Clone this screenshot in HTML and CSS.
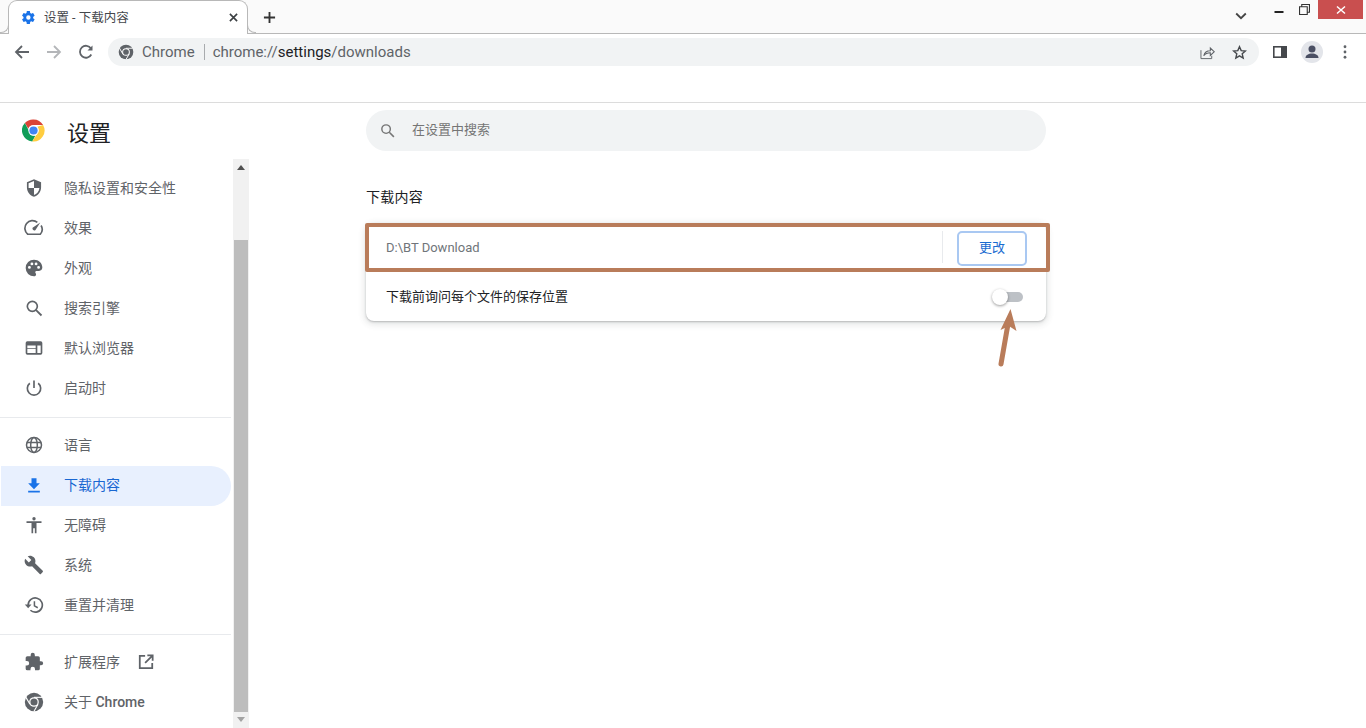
FILE: index.html
```html
<!DOCTYPE html>
<html lang="zh-CN">
<head>
<meta charset="utf-8">
<title>设置 - 下载内容</title>
<link rel="stylesheet" href="styles.css">
</head>
<body>
<svg class="defs" width="0" height="0" aria-hidden="true">
  <symbol id="chrome-mono" viewBox="0 0 24 24">
    <circle cx="12" cy="12" r="11" fill="currentColor"/>
    <g stroke="#fff" stroke-width="1.300"><path d="M12 6.400h10"/><path d="M12 6.400h10" transform="rotate(120 12 12)"/><path d="M12 6.400h10" transform="rotate(240 12 12)"/></g>
    <circle cx="12" cy="12" r="5.800" fill="#fff"/><circle cx="12" cy="12" r="4.300" fill="currentColor"/>
  </symbol>
</svg>
<div class="browser">
  <div class="tabstrip">
    <div class="tab">
      <svg class="tab-gear" viewBox="0 0 24 24"><path fill="#1a73e8" d="M19.400 13c.05-.33.07-.66.07-1s-.03-.67-.08-1l2.200-1.700c.2-.15.250-.43.130-.65l-2.100-3.600a.5.500 0 0 0-.63-.22l-2.600 1a7.700 7.700 0 0 0-1.700-1L14.300 2.100a.5.500 0 0 0-.5-.4H9.700a.5.5 0 0 0-.5.4l-.4 2.700c-.6.250-1.200.6-1.700 1l-2.600-1a.5.500 0 0 0-.6.220l-2.100 3.600c-.13.220-.08.500.12.650L4.100 11c-.05.330-.08.670-.08 1s.03.670.08 1l-2.200 1.700a.5.500 0 0 0-.12.650l2.100 3.600c.12.220.38.300.6.220l2.600-1c.5.400 1.100.750 1.700 1l.4 2.700c.05.240.250.400.5.400h4.100c.25 0 .45-.16.500-.4l.4-2.700c.6-.25 1.200-.6 1.700-1l2.600 1c.22.080.5 0 .62-.22l2.100-3.600a.5.500 0 0 0-.13-.65L19.400 13zM11.800 15.500a3.500 3.500 0 1 1 0-7 3.500 3.500 0 0 1 0 7z"/></svg>
      <span class="tab-title">设置 - 下载内容</span>
      <svg class="tab-close" viewBox="0 0 10 10"><path d="M1 1l8 8M9 1L1 9" stroke="#3c4043" stroke-width="1.800" fill="none"/></svg>
    </div>
    <svg class="new-tab" viewBox="0 0 14 14"><path d="M7 1v12M1 7h12" stroke="#333" stroke-width="2" fill="none"/></svg>
    <div class="strip-right">
      <svg class="tab-search" viewBox="0 0 12 8"><path d="M1.200 1.500 6 6.200l4.800-4.700" stroke="#444" stroke-width="1.800" fill="none"/></svg>
      <svg class="win-min" viewBox="0 0 10 3"><rect width="9" height="2" x=".5" fill="#222"/></svg>
      <svg class="win-max" viewBox="0 0 10 10"><path d="M.5 2.500h7v7h-7zM2.500 2.500v-2h7v7h-2" stroke="#333" fill="none"/></svg>
      <div class="win-close"><svg viewBox="0 0 10 10"><path d="M1 1.500l8 7M9 1.500l-8 7" stroke="#fff" stroke-width="1.500" fill="none"/></svg></div>
    </div>
  </div>
  <div class="toolbar">
    <svg class="nav" viewBox="0 0 16 16"><path d="M15 8H2M8 2 2 8l6 6" stroke="#5f6368" stroke-width="1.800" fill="none"/></svg>
    <svg class="nav" viewBox="0 0 16 16"><path d="M1 8h13M8 2l6 6-6 6" stroke="#b4b6b9" stroke-width="1.800" fill="none"/></svg>
    <svg class="nav" viewBox="0 0 16 16"><path d="M13.300 10.500A6 6 0 1 1 13 4.500" stroke="#5f6368" stroke-width="1.800" fill="none"/><path d="M14.500 1.500v5h-5z" fill="#5f6368"/></svg>
    <div class="omnibox">
      <svg class="omni-logo"><use href="#chrome-mono"/></svg>
      <span class="omni-chip">Chrome</span>
      <span class="omni-sep"></span>
      <span class="omni-url">chrome://<b>settings</b>/downloads</span>
      <span class="spacer"></span>
      <svg class="omni-share" viewBox="0 0 16 16"><path d="M1 5.500v9h11.500v-3" stroke="#5f6368" fill="none"/><path d="M4 11.500c.8-3.500 3.500-5.400 7-5.400V3.200l4.300 4-4.300 4V8.300c-3 0-5.200.8-7 3.200z" stroke="#5f6368" stroke-width="1.100" fill="none"/></svg>
      <svg class="omni-star" viewBox="0 0 16 16"><path d="M8 1.800l1.800 4.200 4.500.4-3.400 3 1 4.500L8 11.500l-3.900 2.400 1-4.500-3.400-3 4.500-.4z" stroke="#45484c" stroke-width="1.500" fill="none"/></svg>
    </div>
    <svg class="panel" viewBox="0 0 14 12"><rect x=".8" y=".8" width="12.400" height="10.400" stroke="#45484c" stroke-width="1.600" fill="#fff"/><rect x="8" y="1" width="5" height="10" fill="#45484c"/></svg>
    <div class="avatar"><svg viewBox="0 0 22 22"><circle cx="11" cy="8" r="3.500" fill="#4a4f63"/><path d="M4.500 17c0-3 3-4.500 6.500-4.500s6.500 1.500 6.500 4.500z" fill="#4a4f63"/></svg></div>
    <svg class="menu-dots" viewBox="0 0 4 16"><circle cx="2" cy="2" r="1.600" fill="#5f6368"/><circle cx="2" cy="8" r="1.600" fill="#5f6368"/><circle cx="2" cy="14" r="1.600" fill="#5f6368"/></svg>
  </div>
  <div class="bookmarks"></div>
</div>
<div class="page">
  <aside class="side">
    <div class="brand">
      <svg class="brand-logo" viewBox="0 0 24 24">
        <path fill="#db4437" d="M12 .5a11.500 11.500 0 0 1 10 5.800H12a5.700 5.700 0 0 0-5.400 3.900L3 4.200A11.500 11.500 0 0 1 12 .5z"/>
        <path fill="#0f9d58" d="M3 4.200l4.400 8.300a5.700 5.700 0 0 0 6.500 5L10.700 23.400A11.500 11.500 0 0 1 3 4.200z"/>
        <path fill="#ffcd40" d="M22 6.300a11.500 11.500 0 0 1-11.300 17.100l4.900-7.900A5.700 5.700 0 0 0 16 8z"/>
        <circle cx="12" cy="12" r="5.400" fill="#fff"/><circle cx="12" cy="12" r="4.300" fill="#4285f4"/>
      </svg>
      <span class="brand-name">设置</span>
    </div>
    <div class="side-scroll">
      <nav class="side-nav">
        <a class="item"><svg viewBox="0 0 24 24"><path fill="#5f6368" d="M12 1.500 3.500 5v6c0 5.300 3.600 10.200 8.500 11.500 4.900-1.300 8.500-6.200 8.500-11.500V5zm0 10.500H5.500V6.300L12 3.600zm0 0h6.500c-.5 4-3 7.500-6.500 8.500z"/></svg><span>隐私设置和安全性</span></a>
        <a class="item"><svg viewBox="0 0 24 24"><path fill="none" stroke="#5f6368" stroke-width="2" d="M20.500 9a9 9 0 0 1-1 10.500h-15A9 9 0 0 1 16 5.200"/><path fill="#5f6368" d="M19.500 5.500 13.800 14.300a2.200 2.200 0 0 1-3.500-2.500z"/></svg><span>效果</span></a>
        <a class="item"><svg viewBox="0 0 24 24"><path fill="#5f6368" fill-rule="evenodd" d="M12 2a10 10 0 0 0 0 20c1.500 0 2.500-1 2.500-2.300 0-1.300-1-1.700-1-2.700s.8-1.500 2-1.500H18c2.300 0 4-1.700 4-4C22 5.800 17.500 2 12 2zM6.500 13a1.700 1.700 0 1 1 0-3.400 1.700 1.700 0 0 1 0 3.400zm3-4.200a1.700 1.700 0 1 1 0-3.400 1.700 1.700 0 0 1 0 3.400zm5 0a1.700 1.700 0 1 1 0-3.400 1.700 1.700 0 0 1 0 3.400zm3 4.200a1.700 1.700 0 1 1 0-3.400 1.700 1.700 0 0 1 0 3.400z"/></svg><span>外观</span></a>
        <a class="item"><svg viewBox="0 0 24 24"><circle cx="10" cy="10" r="6" fill="none" stroke="#5f6368" stroke-width="2"/><path d="M14.500 14.500 21 21" stroke="#5f6368" stroke-width="2.200"/></svg><span>搜索引擎</span></a>
        <a class="item"><svg viewBox="0 0 24 24"><path fill="#5f6368" fill-rule="evenodd" d="M4 4h16a2 2 0 0 1 2 2v12a2 2 0 0 1-2 2H4a2 2 0 0 1-2-2V6a2 2 0 0 1 2-2zm0 5v9h10v-5H4V9zm0 0v3h10V9zm12 0v9h4V9z"/></svg><span>默认浏览器</span></a>
        <a class="item"><svg viewBox="0 0 24 24"><path d="M12 3v9" stroke="#5f6368" stroke-width="2"/><path d="M7 6.300a8 8 0 1 0 10 0" fill="none" stroke="#5f6368" stroke-width="2"/></svg><span>启动时</span></a>
        <div class="rule"></div>
        <a class="item"><svg viewBox="0 0 24 24"><g fill="none" stroke="#5f6368" stroke-width="1.800"><circle cx="12" cy="12" r="9"/><ellipse cx="12" cy="12" rx="4" ry="9"/><path d="M3.500 9h17M3.500 15h17"/></g></svg><span>语言</span></a>
        <a class="item active"><svg viewBox="0 0 24 24"><path fill="#1a73e8" d="M9 4h6v6h4l-7 7-7-7h4zM5 19h14v2H5z"/></svg><span>下载内容</span></a>
        <a class="item"><svg viewBox="0 0 24 24"><circle cx="12" cy="4.500" r="2" fill="#5f6368"/><path fill="#5f6368" d="M3 7.500h18v2h-6V22h-2v-6h-2v6H9V9.500H3z"/></svg><span>无障碍</span></a>
        <a class="item"><svg viewBox="0 0 24 24"><path fill="#5f6368" d="M22.500 19 13.300 9.800c.9-2.400.4-5.100-1.500-7-2-2-5-2.400-7.400-1.300L8.800 5.900 5.800 8.900 1.400 4.600C.2 7 .7 10 2.700 12c1.900 1.900 4.600 2.400 7 1.500l9.200 9.200c.4.400 1 .4 1.400 0l2.200-2.300c.4-.4.400-1 0-1.400z"/></svg><span>系统</span></a>
        <a class="item"><svg viewBox="0 0 24 24"><path fill="none" stroke="#5f6368" stroke-width="2" d="M5 12a8.500 8.500 0 1 1 2.700 6.300"/><path fill="#5f6368" d="M1 11.500h8L5 16z"/><path fill="none" stroke="#5f6368" stroke-width="1.800" d="M12.500 7.500V13l4 2.300"/></svg><span>重置并清理</span></a>
        <div class="rule"></div>
        <a class="item"><svg viewBox="0 0 24 24"><path fill="#5f6368" d="M20.500 11H19V7a2 2 0 0 0-2-2h-4V3.500a2.500 2.500 0 0 0-5 0V5H4a2 2 0 0 0-2 2v3.800h1.500a2.700 2.700 0 0 1 0 5.400H2V20a2 2 0 0 0 2 2h3.800v-1.500a2.700 2.700 0 0 1 5.400 0V22H17a2 2 0 0 0 2-2v-4h1.500a2.500 2.500 0 0 0 0-5z"/></svg><span>扩展程序</span>
          <svg class="ext-open" viewBox="0 0 18 18"><path d="M8 2H2v14h14v-6M10.500 1.500h6v6M16 2 8 10" fill="none" stroke="#5f6368" stroke-width="2"/></svg></a>
        <a class="item"><svg class="about-logo"><use href="#chrome-mono"/></svg><span>关于 <b class="about">Chrome</b></span></a>
      </nav>
      <div class="scrollbar">
        <span class="arrow up"></span>
        <div class="track"><div class="thumb"></div></div>
        <span class="arrow down"></span>
      </div>
    </div>
  </aside>
  <main class="main">
    <div class="search">
      <svg viewBox="0 0 24 24"><circle cx="10" cy="10" r="6" fill="none" stroke="#757575" stroke-width="2"/><path d="M14.500 14.500 21 21" stroke="#757575" stroke-width="2.200"/></svg>
      <span>在设置中搜索</span>
    </div>
    <h2 class="section">下载内容</h2>
    <section class="card">
      <div class="row row-path">
        <span class="path">D:\BT Download</span>
        <span class="vsep"></span>
        <button class="change">更改</button>
      </div>
      <div class="row row-ask">
        <span class="ask">下载前询问每个文件的保存位置</span>
        <span class="toggle"><i class="knob"></i></span>
      </div>
      <div class="highlight"></div>
      <svg class="pointer" viewBox="0 0 24 62"><path d="M6 56 13 16" stroke="#b97c5a" stroke-width="5" stroke-linecap="round" fill="none"/><path d="M15.500 1 21.500 23 14 18 5.500 22z" fill="#b97c5a"/></svg>
    </section>
  </main>
</div>
</body>
</html>
```
FILE: styles.css
```css
* { box-sizing: border-box; }
html, body { margin: 0; height: 100%; overflow: hidden; }
body { width: 1366px; height: 728px; background: #fff; color: #3c4043; font-family: Roboto, "Noto Sans CJK SC", sans-serif; display: flex; flex-direction: column; }
.defs { position: absolute; }
.browser { flex: none; height: 103px; border-bottom: 1px solid #dcdcdc; }
.tabstrip { height: 34px; background: #fafafa; border-bottom: 1px solid #b8b8b8; display: flex; align-items: flex-start; padding-left: 8px; }
.tab { position: relative; width: 240px; height: 34px; background: #fff; border: 1px solid #b8b8b8; border-bottom: none; border-radius: 9px 9px 0 0; display: flex; align-items: center; padding: 0 9px 0 12px; margin-bottom: -1px; }
.tab::before, .tab::after { content: ""; position: absolute; bottom: 1px; width: 8px; height: 8px; border-bottom: 1px solid #b8b8b8; }
.tab::before { left: -9px; border-right: 1px solid #b8b8b8; border-radius: 0 0 8px 0; }
.tab::after { right: -9px; border-left: 1px solid #b8b8b8; border-radius: 0 0 0 8px; }
.tab-gear { width: 15px; height: 15px; flex: none; }
.tab-title { font-size: 12.500px; color: #45484c; margin: 0 0 2px 8px; flex: 1; }
.tab-close { width: 9px; height: 9px; }
.new-tab { width: 13px; height: 13px; margin: 11px 0 0 15px; }
.strip-right { margin-left: auto; display: flex; align-items: flex-start; height: 33px; }
.tab-search { width: 12px; height: 8px; margin: 12px 27px 0 0; }
.win-min { width: 10px; height: 3px; margin: 11px 15px 0 0; }
.win-max { width: 11px; height: 11px; margin: 4px 8px 0 0; }
.win-close { width: 45px; height: 19px; margin-right: 3px; background: #c94f4f; display: flex; align-items: center; justify-content: center; }
.win-close svg { width: 10px; height: 10px; }
.toolbar { height: 36px; display: flex; align-items: center; padding: 0 11px 0 14px; background: #fff; }
.nav { width: 16px; height: 16px; margin-right: 16px; flex: none; }
.omnibox { width: 1151px; height: 28px; margin-left: -2px; border-radius: 14px; background: #f1f3f4; display: flex; align-items: center; padding: 0 12px 0 10px; flex: none; }
.omni-logo { width: 16px; height: 16px; color: #5f6368; flex: none; }
.omni-chip { font-size: 15px; color: #5f6368; margin-left: 8px; }
.omni-sep { width: 1px; height: 16px; background: #a8abae; margin: 0 8px 0 9px; }
.omni-url { font-size: 15px; color: #5f6368; }
.omni-url b { font-weight: 400; color: #202124; }
.spacer { flex: 1; }
.omni-share { width: 15px; height: 15px; margin-right: 17px; }
.omni-star { width: 15px; height: 15px; }
.panel { width: 14px; height: 12px; margin-left: 14px; flex: none; }
.avatar { width: 22px; height: 22px; border-radius: 50%; background: #e3e5ea; margin-left: 14px; flex: none; }
.avatar svg { width: 22px; height: 22px; display: block; }
.menu-dots { width: 4px; height: 14px; margin-left: 20px; flex: none; }
.bookmarks { height: 32px; background: #fff; }
.page { flex: 1; display: flex; min-height: 0; }
.side { width: 249px; flex: none; display: flex; flex-direction: column; }
.brand { height: 56px; display: flex; align-items: center; padding: 0 0 3px 22px; flex: none; }
.brand-logo { width: 23px; height: 23px; flex: none; margin-top: 1px; }
.brand-name { font-size: 22px; margin: 8px 0 0 22px; color: #202124; line-height: 1; }
.side-scroll { flex: 1; display: flex; min-height: 0; }
.side-nav { flex: 1; display: flex; flex-direction: column; padding: 9px 2px 0 0; min-width: 0; }
.item { height: 40px; flex: none; display: flex; align-items: center; padding-left: 24px; font-size: 14px; color: #5f6368; }
.item > span { margin-bottom: 2px; }
.item > svg:first-child { width: 20px; height: 20px; margin-right: 20px; flex: none; }
.item.active { background: #e8f0fe; color: #1967d2; border-radius: 0 20px 20px 0; margin: 1px 0 -1px 1px; padding-left: 23px; }
.item.active > span { margin-bottom: 4px; }
.item.active > svg { margin-bottom: 2px; }
.rule { height: 1px; flex: none; background: #e8eaed; margin: 9px 0 7px; }
.ext-open { width: 16px; height: 16px; margin-left: 18px; }
.about-logo { color: #5f6368; }
.about { font-weight: 500; }
.scrollbar { width: 16px; flex: none; background: #f1f1f1; display: flex; flex-direction: column; align-items: center; }
.arrow { width: 0; height: 0; flex: none; border-left: 4px solid transparent; border-right: 4px solid transparent; }
.arrow.up { border-bottom: 5px solid #505050; margin: 6px 0 5px; }
.arrow.down { border-top: 5px solid #a3a3a3; margin: 5px 0 6px; }
.track { flex: 1; width: 100%; display: flex; flex-direction: column; justify-content: flex-end; }
.thumb { height: 472px; margin: 0 1px; background: #bdbdbd; }
.main { flex: 1; padding: 7px 0 0 117px; min-width: 0; }
.search { width: 680px; height: 41px; border-radius: 21px; background: #f1f3f4; display: flex; align-items: center; padding-left: 13px; color: #757575; font-size: 13px; }
.search svg { width: 17px; height: 17px; margin-right: 16px; flex: none; }
.search span { margin-bottom: 4px; }
.section { font-size: 14px; font-weight: 400; color: #202124; margin: 36px 0 0; line-height: 20px; letter-spacing: .25px; }
.card { position: relative; width: 680px; height: 98px; margin-top: 16px; border-radius: 8px; background: #fff; box-shadow: 0 1px 2px rgba(60,64,67,.3), 0 2px 6px 2px rgba(60,64,67,.12); }
.row { display: flex; align-items: center; padding: 0 20px; }
.row-path { height: 48px; padding-right: 19px; }
.path { flex: 1; font-size: 13px; color: #70757a; }
.vsep { width: 1px; height: 32px; background: #e8eaed; margin-right: 14px; }
.change { width: 70px; height: 35px; margin-top: 2px; padding: 0 0 4px; border: 2px solid #a9c8f2; border-radius: 5px; background: #fff; color: #1a6bd0; font: 13px Roboto, "Noto Sans CJK SC", sans-serif; }
.row-ask { height: 50px; justify-content: space-between; padding-right: 23px; }
.ask { font-size: 13px; color: #202124; margin-bottom: 2px; }
.toggle { width: 30px; height: 10px; margin-top: 2px; border-radius: 5px; background: #bdc1c6; position: relative; }
.knob { position: absolute; left: -1px; top: -3px; width: 16px; height: 16px; border-radius: 50%; background: #fff; box-shadow: 0 1px 3px rgba(0,0,0,.4); }
.highlight { position: absolute; left: -1px; top: 0; width: 685px; height: 49px; border: 4px solid #b97c5a; border-radius: 2px; }
.pointer { position: absolute; left: 629px; top: 85px; width: 24px; height: 62px; }
```
